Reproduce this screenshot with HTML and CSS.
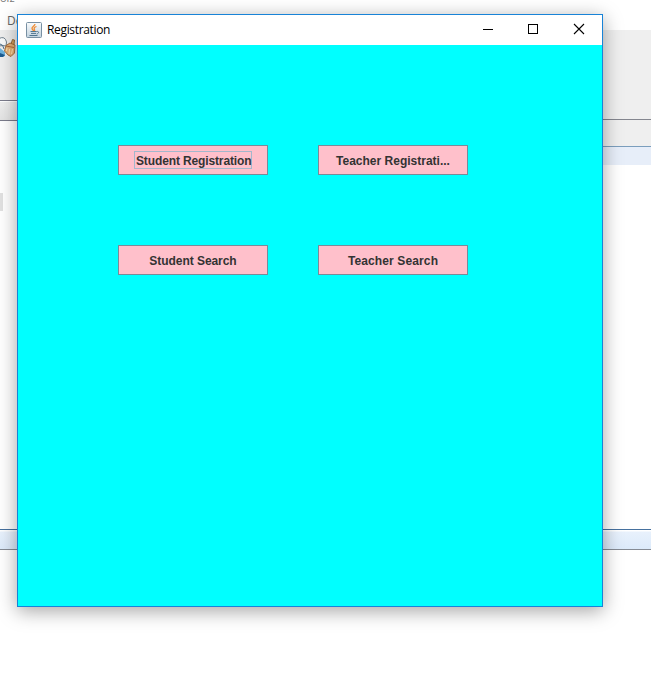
FILE: index.html
```
<!DOCTYPE html>
<html lang="en">
<head>
<meta charset="utf-8">
<title>Registration</title>
<link rel="stylesheet" href="styles.css">
</head>
<body>
<div class="desktop">
  <div class="backdrop">
    <div class="side side-left">
      <div class="caption"><span class="cut">oiz</span><span class="menu">De</span></div>
      <div class="toolbar">
        <svg class="broom" width="17" height="24" viewBox="0 0 17 24">
          <path d="M0 13L5 17V21L2 22H0z" fill="#6db3de"/>
          <path d="M0 18L5 20 3 22H0z" fill="#1d5c91"/>
          <path d="M-1 3.500Q5 .5 6.500 7L6 11Q3 10-1 11z" fill="#f8fafb" stroke="#71808c"/>
          <path d="M0 9Q3 9 4 14" fill="none" stroke="#476b88"/>
          <path d="M11 9L12.500 4.500 14.500 5 14 10z" fill="#d9a35e" stroke="#805426" stroke-width=".8"/>
          <path d="M6 10.500L10 8 15 10 14.500 18 11 21.500 8 20 4.500 16z" fill="#e5b176" stroke="#9c6734" stroke-width=".9"/>
          <path d="M6 11L14 12.500" stroke="#b16b38"/>
          <path d="M7 13L6.500 16M9.500 14L9 19M12.500 14L11.500 19" stroke="#ffe2af"/>
        </svg>
      </div>
      <div class="strip"></div>
      <div class="editor"><div class="thumb"></div></div>
      <div class="panel"></div>
    </div>
    <div class="side side-right">
      <div class="caption"></div>
      <div class="toolbar"></div>
      <div class="strip"></div>
      <div class="highlight"></div>
      <div class="editor"></div>
      <div class="panel"></div>
    </div>
  </div>
  <div class="window">
    <header class="titlebar">
      <svg class="java" width="16" height="16" viewBox="0 0 16 16">
        <defs><linearGradient id="tile" x2="0" y2="1"><stop stop-color="#f9fbfc"/><stop offset="1" stop-color="#c3d3df"/></linearGradient></defs>
        <rect x=".5" y=".5" width="15" height="15" rx="1" fill="url(#tile)" stroke="#7890a3"/>
        <path d="M9 2C9 4 5.500 4.500 6 6.500 6.200 7.500 7.500 8 7.500 9M10.500 4.500C7.500 5.500 8 6.500 8.500 7.500 9 8.300 8 9 8 9" fill="none" stroke="#ef8b32" stroke-width="1.300"/>
        <path d="M4.500 9.500H10.500M5 11.400H10M3.500 13.500H11.500M10.500 9.500C13.500 9 13 11.500 10.700 12" fill="none" stroke="#50758f"/>
      </svg>
      <span class="title">Registration</span>
      <svg class="controls" width="138" height="30" viewBox="0 0 138 30" fill="none" stroke="#000" shape-rendering="crispEdges">
        <path d="M19 14.500H29"/>
        <rect x="64.500" y="9.500" width="9" height="9"/>
        <path d="M110 9L120 19M120 9L110 19" shape-rendering="auto" stroke-width="1.100"/>
      </svg>
    </header>
    <main class="content">
      <button class="action focused"><span class="l1">Student Registration</span></button>
      <button class="action"><span class="l2">Teacher Registrati...</span></button>
      <button class="action"><span class="l3">Student Search</span></button>
      <button class="action"><span class="l4">Teacher Search</span></button>
    </main>
  </div>
</div>
</body>
</html>
```
FILE: styles.css
```
* { box-sizing: border-box; }
body { margin: 0; overflow: hidden; background: #fff; }
.desktop { position: relative; width: 651px; height: 679px; overflow: hidden; }
.backdrop { display: flex; justify-content: space-between; height: 100%; }
.side { display: flex; flex-direction: column; }
.side-left { width: 18px; }
.side-right { width: 49px; }
.caption { display: flex; flex-direction: column; height: 30px; overflow: hidden; font: 12px/16px "Open Sans", sans-serif; color: #666; }
.cut { margin-top: -10px; height: 16px; font-size: 11px; color: #777; }
.menu { margin: 7px 0 0 7px; }
.toolbar { height: 71px; background: #efefef; border-bottom: 1px solid #7b7c8c; }
.side-right .toolbar { height: 90px; border-color: #84868f; }
.broom { display: block; margin-top: 5px; }
.strip { height: 20px; background: linear-gradient(#fff 1px, #eee 1px, #e3e3e3); border-bottom: 1px solid #7b7c8c; }
.side-right .strip { height: 27px; background: #efefef; border-color: #7b9ebd; }
.highlight { height: 18px; background: #e7eef9; }
.side-left .editor { height: 408px; padding-top: 72px; }
.side-right .editor { height: 364px; }
.thumb { width: 3px; height: 18px; background: #e1e1e1; }
.panel { height: 21px; background: linear-gradient(#fff 1px, #e8f1fc 2px, #dceafa); border-top: 1px solid #46719f; border-bottom: 1px solid #858b94; }
.window { position: absolute; left: 17px; top: 14px; width: 586px; height: 593px; display: flex; flex-direction: column; border: 1px solid #1883d7; background: #fff; box-shadow: 0 4px 18px rgba(0,0,0,.36); }
.titlebar { display: flex; align-items: center; height: 30px; padding-left: 8px; flex: none; }
.title { margin-left: 5px; font: 12px/16px "Open Sans", sans-serif; letter-spacing: -.34px; color: #000; }
.java { margin-top: -1px; }
.controls { margin-left: auto; }
.content { flex: 1; display: grid; grid-template-columns: 150px 150px; grid-auto-rows: 30px; gap: 70px 50px; align-content: start; padding: 100px; background: #0ff; }
.action { display: flex; align-items: center; justify-content: center; padding: 0; border: 1px solid #7a8a99; border-radius: 0; background: #ffc0cb; color: #333; font: bold 12px/16px "Liberation Sans", Arial, sans-serif; white-space: nowrap; }
.action span { padding-top: 2px; }
.action .l1 { height: 18px; width: 118px; padding: 1px 0 0 1px; border: 1px solid #a3b8cc; line-height: 16px; text-align: left; letter-spacing: -.13px; }
.l3 { letter-spacing: -.05px; }
.l4 { letter-spacing: .12px; }
```
